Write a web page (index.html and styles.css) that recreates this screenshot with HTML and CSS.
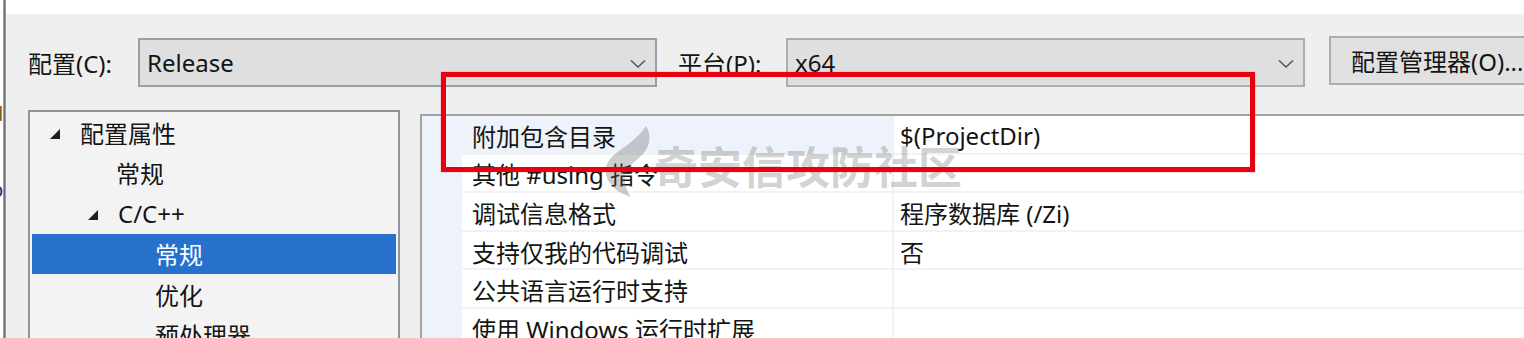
FILE: index.html
```html
<!DOCTYPE html>
<html lang="zh-CN">
<head>
<meta charset="utf-8">
<title>属性页</title>
<link rel="stylesheet" href="styles.css">
</head>
<body>
<div class="app">
  <div class="edge">
    <div class="edge-text t1">d</div>
    <div class="edge-text t2">(</div>
    <div class="edge-text t3">p</div>
    <div class="edge-text t4">t</div>
    <div class="edge-text t5">(</div>
  </div>
  <div class="vline"></div>
  <div class="main">
    <div class="topstrip"></div>
    <div class="toolbar">
      <span class="label lbl-config">配置(C):</span>
      <div class="combo combo-config">
        <span class="combo-text">Release</span>
        <svg class="chev" width="16" height="10" viewBox="0 0 16 10"><path d="M1 1.5 L8 8 L15 1.5" fill="none" stroke="#555" stroke-width="1.5"/></svg>
      </div>
      <span class="label lbl-platform">平台(P):</span>
      <div class="combo combo-platform">
        <span class="combo-text">x64</span>
        <svg class="chev" width="16" height="10" viewBox="0 0 16 10"><path d="M1 1.5 L8 8 L15 1.5" fill="none" stroke="#555" stroke-width="1.5"/></svg>
      </div>
      <div class="button">配置管理器(O)...</div>
    </div>
    <div class="content">
      <div class="tree">
        <div class="node lvl0"><span class="tri"></span><span>配置属性</span></div>
        <div class="node lvl1"><span>常规</span></div>
        <div class="node lvl1 has-tri"><span class="tri"></span><span>C/C++</span></div>
        <div class="node lvl2 selected"><span>常规</span></div>
        <div class="node lvl2"><span>优化</span></div>
        <div class="node lvl2"><span>预处理器</span></div>
      </div>
      <div class="grid">
        <div class="row active">
          <div class="gutter"></div>
          <div class="name">附加包含目录</div>
          <div class="value">$(ProjectDir)</div>
        </div>
        <div class="row">
          <div class="gutter"></div>
          <div class="name">其他 #using 指令</div>
          <div class="value"></div>
        </div>
        <div class="row">
          <div class="gutter"></div>
          <div class="name">调试信息格式</div>
          <div class="value">程序数据库 (/Zi)</div>
        </div>
        <div class="row">
          <div class="gutter"></div>
          <div class="name">支持仅我的代码调试</div>
          <div class="value">否</div>
        </div>
        <div class="row">
          <div class="gutter"></div>
          <div class="name">公共语言运行时支持</div>
          <div class="value"></div>
        </div>
        <div class="row">
          <div class="gutter"></div>
          <div class="name">使用 Windows 运行时扩展</div>
          <div class="value"></div>
        </div>
      </div>
    </div>
  </div>
  <div class="watermark">
    <svg class="wm-logo" width="56" height="74" viewBox="0 0 56 74"><path d="M50 2 C56 12 54 23 46 31 C38 39 30 43 29 53 C28 61 31 67 35 73 C19 68 8 57 10 44 C12 32 26 26 35 18 C41 13 46 8 50 2 Z" fill="rgba(100,100,100,0.32)"/></svg>
    <span class="wm-text">奇安信攻防社区</span>
  </div>
  <div class="highlight"></div>
</div>
</body>
</html>
```
FILE: styles.css
```css
* { box-sizing: border-box; }
html, body {
  margin: 0;
  padding: 0;
}
body {
  width: 1524px;
  height: 338px;
  overflow: hidden;
  background: #efefef;
  font-family: "Noto Sans", "Noto Sans CJK SC", sans-serif;
  font-size: 24px;
  color: #141414;
}
.app {
  position: relative;
  display: flex;
  width: 1524px;
  height: 338px;
}
.edge {
  width: 3px;
  height: 338px;
  flex-shrink: 0;
  background: #ffffff;
  overflow: hidden;
  position: relative;
}
.edge-text {
  position: absolute;
  left: -9px;
  font-size: 20px;
  line-height: 20px;
}
.t1 { top: 104px; color: #7a5a20; }
.t2 { top: 143px; color: #6a4a9a; }
.t3 { top: 180px; color: #26307a; }
.t4 { top: 286px; color: #3a3aa0; }
.t5 { top: 322px; color: #8a70c0; }
.vline {
  width: 3px;
  height: 338px;
  flex-shrink: 0;
  background: linear-gradient(to right, #b5b5b5, #707070, #b0b0b0);
}
.main {
  flex: 1;
  display: flex;
  flex-direction: column;
  min-width: 0;
  overflow: hidden;
}
.topstrip {
  height: 14px;
  flex-shrink: 0;
  background: #ffffff;
}
.toolbar {
  height: 96px;
  flex-shrink: 0;
  display: flex;
  align-items: flex-start;
  padding: 22px 0 0 22px;
  overflow: hidden;
}
.label {
  height: 49px;
  margin-top: 2px;
  display: flex;
  align-items: center;
  white-space: nowrap;
  flex-shrink: 0;
}
.lbl-config { width: 110px; }
.lbl-platform { width: 108px; margin-left: 21px; }
.combo {
  width: 519px;
  height: 49px;
  margin-top: 2px;
  background: #dfdfdf;
  border: 2px solid #adadad;
  display: flex;
  align-items: center;
  justify-content: space-between;
  padding: 0 9px 0 7px;
  flex-shrink: 0;
}
.combo-config { border-color: #95a0ae; }
.chev { display: block; margin-top: 2px; }
.button {
  margin-left: 24px;
  width: 210px;
  height: 49px;
  flex-shrink: 0;
  background: #e1e1e1;
  border: 2px solid #adadad;
  display: flex;
  align-items: center;
  padding-left: 20px;
  white-space: nowrap;
}
.content {
  flex: 1;
  display: flex;
  align-items: flex-start;
  min-height: 0;
}
.tree {
  margin-left: 22px;
  width: 372px;
  flex-shrink: 0;
  height: 228px;
  border: 2px solid #8f949c;
  border-bottom: none;
  background: #f3f3f3;
  overflow: hidden;
}
.node {
  height: 40.5px;
  display: flex;
  align-items: center;
  white-space: nowrap;
}
.node.lvl0 { padding-left: 20px; }
.node.lvl1 { padding-left: 86px; }
.node.lvl1.has-tri { padding-left: 58px; }
.node.lvl2 { padding-left: 125px; }
.tri {
  width: 0;
  height: 0;
  border-style: solid;
  border-width: 0 0 10px 10px;
  border-color: transparent transparent #1e1e1e transparent;
  margin-right: 20px;
  margin-top: 4px;
}
.node.selected {
  background: #2771cd;
  color: #ffffff;
  margin: 0 2px;
  padding-left: 123px;
}
.grid {
  flex: 1;
  margin-left: 20px;
  margin-top: 4px;
  height: 224px;
  border-top: 2px solid #a3a3a3;
  border-left: 2px solid #a3a3a3;
  background: #ffffff;
  overflow: hidden;
}
.row {
  display: flex;
  height: 38.6px;
}
.gutter {
  width: 40px;
  background: #eef2fa;
}
.name, .value {
  display: flex;
  align-items: center;
  white-space: nowrap;
  padding-top: 2px;
  border-bottom: 2px solid #f1f2f8;
}
.name {
  width: 432px;
  padding-left: 10px;
  border-right: 2px solid #f1f2f8;
}
.value {
  flex: 1;
  padding-left: 6px;
}
.row.active .name { background: #edf2fb; }
.watermark {
  position: absolute;
  left: 596px;
  top: 124px;
  display: flex;
  align-items: center;
  pointer-events: none;
}
.wm-text {
  margin-left: 2px;
  margin-top: 8px;
  font-family: "Noto Sans CJK SC", sans-serif;
  font-size: 44px;
  font-weight: bold;
  color: rgba(100, 100, 100, 0.3);
  white-space: nowrap;
}
.highlight {
  position: absolute;
  left: 441px;
  top: 72px;
  width: 814px;
  height: 100px;
  border: 5px solid #e8000e;
  box-shadow: 0 0 1px rgba(232, 0, 14, 0.6);
  pointer-events: none;
}
```
